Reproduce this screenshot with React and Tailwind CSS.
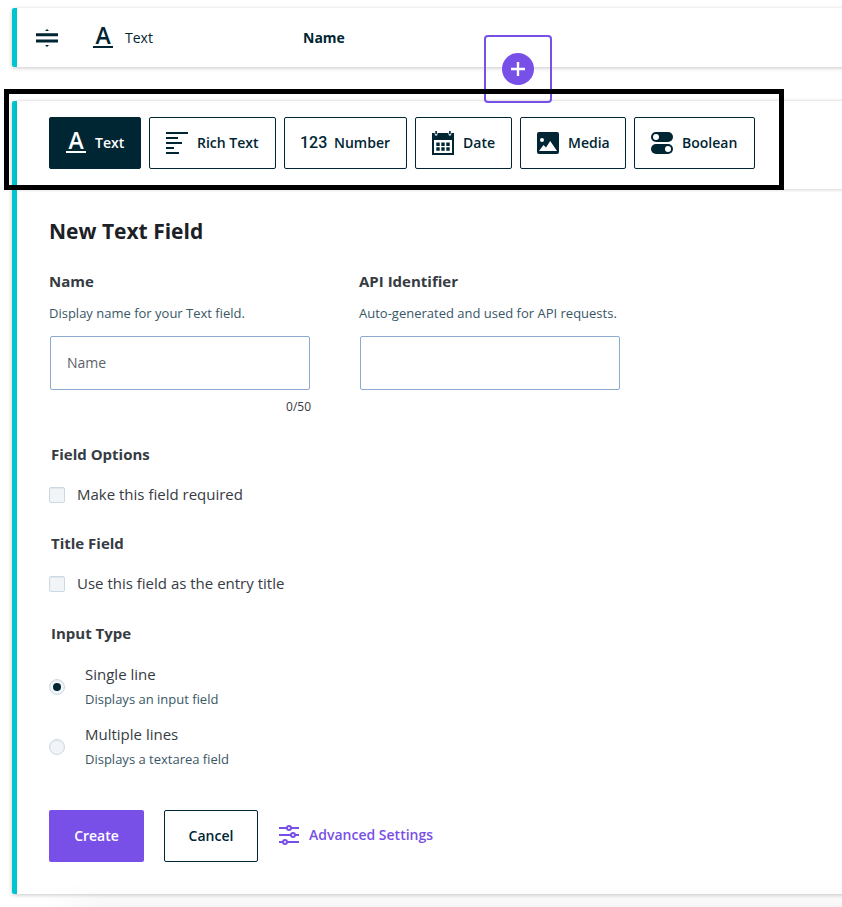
import React from "react";

const INK = "#002533";

function TextIcon() {
  return (
    <span className="flex h-5 w-5 shrink-0 flex-col items-center border-b-2 border-current font-['Open_Sans',sans-serif] text-[23px] leading-[15px] font-semibold">
      A
    </span>
  );
}

function DragIcon() {
  return (
    <svg width="22" height="18" viewBox="0 0 22 18" fill={INK}>
      <path d="M11 0l2 2H9zM11 18l2-2H9z" />
      <path d="M0 4.3h22v3H0zM0 10.6h22v3H0z" />
    </svg>
  );
}

function RichIcon() {
  return (
    <svg width="22" height="22" viewBox="0 0 22 22" fill={INK}>
      <path d="M0 0h22v2H0zM0 5h12v2H0zM0 10h16v2H0zM0 15h8v2H0zM0 20h13v2H0z" />
    </svg>
  );
}

function DateIcon() {
  return (
    <svg width="22" height="24" viewBox="0 0 22 24" fill={INK}>
      <path fillRule="evenodd" d="M0 2h2.7v1.3a1.4 1.4 0 0 0 2.8 0V2h11v1.3a1.4 1.4 0 0 0 2.8 0V2H22v22H0zM2 9v13h18V9z" />
      <path d="M3.3 0h1.6v3.3H3.3zM17.1 0h1.6v3.3h-1.6z" />
      <path d="M4.3 11.5h3.4v3.4H4.3zM9.3 11.5h3.4v3.4H9.3zM14.3 11.5h3.4v3.4h-3.4zM4.3 16.3h3.4v3.4H4.3zM9.3 16.3h3.4v3.4H9.3zM14.3 16.3h3.4v3.4h-3.4z" />
    </svg>
  );
}

function MediaIcon() {
  return (
    <svg width="22" height="22" viewBox="0 0 22 22">
      <rect width="22" height="22" rx="2" fill={INK} />
      <circle cx="5" cy="8" r="2" fill="#fff" />
      <path d="M2 19l4.5-6 2.5 2.5L13.2 9 20 19z" fill="#fff" />
    </svg>
  );
}

function BooleanIcon() {
  return (
    <svg width="22" height="22" viewBox="0 0 22 22">
      <rect width="22" height="10" rx="5" fill={INK} />
      <rect y="12" width="22" height="10" rx="5" fill={INK} />
      <circle cx="5" cy="5" r="3" fill="#fff" />
      <circle cx="17" cy="17" r="3" fill="#fff" />
    </svg>
  );
}

function SettingsIcon() {
  return (
    <svg width="20" height="20" viewBox="0 0 20 20" fill="none" stroke="#7850e8" strokeWidth="2">
      <path d="M0 3h8M12 3h8M0 10h12M16 10h4M0 17h4M8 17h12" />
      <circle cx="10" cy="3" r="2" />
      <circle cx="14" cy="10" r="2" />
      <circle cx="6" cy="17" r="2" />
    </svg>
  );
}

function Tab({ label, icon, className }) {
  return (
    <button className={`flex h-[52px] shrink-0 items-center rounded-[2px] border border-[#002533] pl-4 text-sm font-semibold ${className}`}>
      {icon}
      <span className="whitespace-nowrap">{label}</span>
    </button>
  );
}

function Field({ label, help, placeholder, counter }) {
  return (
    <div className="w-[262px]">
      <div className="h-6 text-[15px] leading-6 font-bold">{label}</div>
      <div className="mt-2.5 h-5 text-[13px] leading-5 whitespace-nowrap text-[#385766]">{help}</div>
      <input
        className="mt-[13px] ml-px block h-[54px] w-[260px] rounded-[2px] border border-[#8dabd0] px-4 pb-0.5 text-sm placeholder:text-[#5c6269]"
        placeholder={placeholder}
      />
      <div className="mt-[9px] h-[15px] text-right text-xs leading-4">{counter}</div>
    </div>
  );
}

function Check({ label }) {
  return (
    <label className="mt-[17px] flex h-6 items-center gap-3 text-[15px]">
      <span className="h-4 w-4 rounded-[2px] border border-[#cbd9e6] bg-[#f1f5f8] shadow-[inset_0_1px_1px_rgba(0,0,0,0.06)]" />
      <span className="pb-0.5">{label}</span>
    </label>
  );
}

function Radio({ label, help, checked }) {
  return (
    <label className="flex h-[52px] items-center gap-5">
      <span className="flex h-4 w-4 items-center justify-center rounded-full border border-[#cbd9e6] bg-[#f1f5f8] shadow-[inset_0_1px_1px_rgba(0,0,0,0.06)]">
        {checked && <span className="h-2 w-2 rounded-full bg-[#002533]" />}
      </span>
      <span className="flex flex-col">
        <span className="h-6 text-[15px] leading-[22px]">{label}</span>
        <span className="text-[13px] leading-6 text-[#385766]">{help}</span>
      </span>
    </label>
  );
}

export default function App() {
  return (
    <div className="relative h-[907px] w-[842px] overflow-hidden bg-white pt-2 pl-3 font-['Open_Sans',sans-serif] text-[#363b43]">
      <div className="flex h-[59px] w-[860px] items-center rounded-l-[2px] border-l-[5px] border-[#00c4cf] pl-[19px] text-[#002533] shadow-[0_1px_4px_rgba(0,0,0,0.22)]">
        <DragIcon />
        <div className="ml-[35px] flex w-[210px] items-center gap-3">
          <TextIcon />
          <span className="text-sm">Text</span>
        </div>
        <span className="text-sm font-bold">Name</span>
      </div>

      <div className="mt-[34px] w-[860px] rounded-l-[2px] border-l-[5px] border-[#00c4cf] shadow-[0_1px_4px_rgba(0,0,0,0.22)]">
        <div className="flex h-[88px] items-center gap-2 pb-1 pl-8 text-[#002533] shadow-[0_1px_3px_rgba(0,0,0,0.16)]">
          <Tab label="Text" icon={<TextIcon />} className="w-[92px] gap-[9px] bg-[#002533] text-white" />
          <Tab label="Rich Text" icon={<RichIcon />} className="w-[127px] gap-[9px]" />
          <Tab
            label="Number"
            icon={<span className="-ml-px w-[26px] font-[Roboto,sans-serif] text-base font-medium">123</span>}
            className="w-[123px] gap-[8px]"
          />
          <Tab label="Date" icon={<DateIcon />} className="w-[97px] gap-[9px]" />
          <Tab label="Media" icon={<MediaIcon />} className="w-[106px] gap-[9px]" />
          <Tab label="Boolean" icon={<BooleanIcon />} className="w-[121px] gap-[9px]" />
        </div>

        <div className="px-8 pt-[26px] pb-8">
          <h1 className="h-8 text-[21px] leading-8 font-bold text-[#1b2126]">New Text Field</h1>
          <div className="mt-[22px] flex gap-12">
            <Field label="Name" help="Display name for your Text field." placeholder="Name" counter="0/50" />
            <Field label="API Identifier" help="Auto-generated and used for API requests." />
          </div>
          <h2 className="mt-7 ml-0.5 text-[15px] leading-6 font-bold">Field Options</h2>
          <Check label="Make this field required" />
          <h2 className="mt-6 ml-0.5 text-[15px] leading-6 font-bold">Title Field</h2>
          <Check label="Use this field as the entry title" />
          <h2 className="mt-[25px] ml-0.5 text-[15px] leading-6 font-bold">Input Type</h2>
          <div className="mt-4 flex flex-col gap-2">
            <Radio label="Single line" help="Displays an input field" checked />
            <Radio label="Multiple lines" help="Displays a textarea field" />
          </div>
          <div className="mt-[37px] flex h-[52px] items-center text-sm font-semibold">
            <button className="h-[52px] w-[95px] rounded-[2px] bg-[#7850e8] text-white">Create</button>
            <button className="ml-5 h-[52px] w-[94px] rounded-[2px] border border-[#002533] text-[#002533]">Cancel</button>
            <a className="ml-[21px] flex items-center gap-2.5 pb-0.5 text-[#7850e8]">
              <SettingsIcon />
              Advanced Settings
            </a>
          </div>
        </div>
      </div>

      <div className="absolute top-[35px] left-[484px] flex h-[68px] w-[68px] items-center justify-center rounded-[4px] border-2 border-[#7850e8]">
        <span className="flex h-8 w-8 items-center justify-center rounded-full bg-[#7850e8]">
          <svg width="14" height="14" viewBox="0 0 14 14" stroke="#fff" strokeWidth="2.4">
            <path d="M7 0v14M0 7h14" />
          </svg>
        </span>
      </div>
      <div className="absolute top-[89px] left-[4px] h-[101px] w-[780px] border-[5px] border-black" />
      <div className="absolute top-[917px] left-[70px] h-10 w-[860px] shadow-[0_0_40px_rgba(0,0,0,0.13)]" />
    </div>
  );
}
